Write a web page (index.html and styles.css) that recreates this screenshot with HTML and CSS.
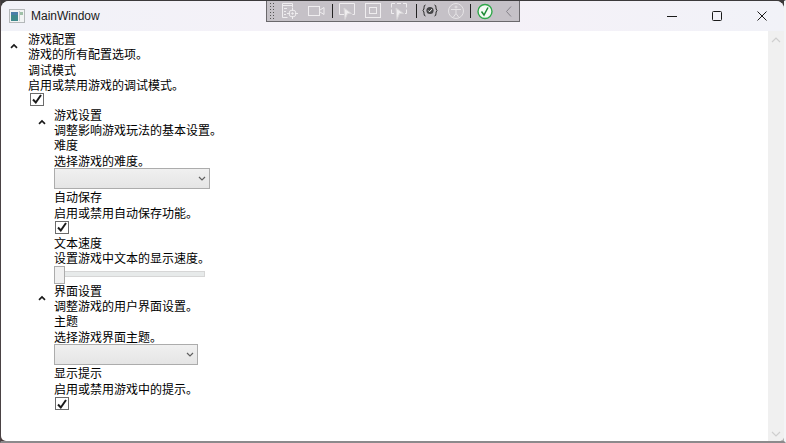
FILE: index.html
```html
<!DOCTYPE html>
<html lang="zh">
<head>
<meta charset="utf-8">
<title>MainWindow</title>
<link rel="stylesheet" href="styles.css">
</head>
<body>
<div class="window">
  <header class="titlebar">
    <svg class="app-icon" width="16" height="14" viewBox="0 0 16 14"><rect x="0.500" y="0.500" width="15" height="13" fill="#f2f4f4" stroke="#b4b8ba"/><rect x="2" y="3" width="7" height="9" fill="#3f8a8c"/><rect x="2" y="3" width="7" height="3" fill="#4a7fa8"/><rect x="10" y="2" width="1" height="10" fill="#c8ccce"/><rect x="11" y="3" width="3" height="3" fill="#9fc0a8"/></svg>
    <span class="title">MainWindow</span>
    <div class="debug-bar">
      <span class="grip"></span>
      <svg class="tool" width="26" height="20" viewBox="0 0 26 20" fill="none" stroke="#efedef"><path d="M15.500 6.500v-4h-10v14h5M5.500 4.500h10M7 7.500h3M7 10.500h2M7 13.500h2"/><circle cx="15.500" cy="12.500" r="3.500"/><circle cx="15.500" cy="12.500" r="0.800" fill="#efedef"/><path d="M15.500 7v3M15.500 15v3M10 12.500h3M18 12.500h3"/></svg>
      <svg class="tool" width="26" height="20" viewBox="0 0 26 20" fill="none" stroke="#efedef"><rect x="5.500" y="5.500" width="11" height="9"/><path d="M17 9l4-2.500v7l-4-2.500"/></svg>
      <span class="sep sep-one"></span>
      <svg class="tool" width="26" height="20" viewBox="0 0 26 20" fill="none" stroke="#efedef"><path d="M10 13.500H5.500v-11h15v11h-2"/><path d="M10 7l7.500 5.500h-4l-2.500 6z" fill="#efedef" stroke="#d8d6d8"/></svg>
      <svg class="tool" width="26" height="20" viewBox="0 0 26 20" fill="none" stroke="#efedef"><rect x="5.500" y="2.500" width="15" height="14"/><rect x="9.500" y="6.500" width="7" height="6"/></svg>
      <svg class="tool" width="26" height="20" viewBox="0 0 26 20" fill="none" stroke="#efedef"><path d="M8 12.500H5.500v-4M5.500 6.500v-4H9M11 2.500h4M17 2.500h3.500v4M20.500 8.500v4H19"/><path d="M10 7l7.500 5.500h-4l-2.500 6z" fill="#efedef" stroke="#d8d6d8"/></svg>
      <span class="sep sep-two"></span>
      <svg class="tool" width="26" height="20" viewBox="0 0 26 20" fill="none" stroke="#2a2a2a"><path d="M8.500 5c-2.500 0-.5 4-2.500 5.500 2 1.500 0 5.500 2.500 5.500M17.500 5c2.500 0 .5 4 2.500 5.500-2 1.500 0 5.500-2.500 5.500" transform="translate(0 -1)"/><circle cx="13" cy="9.500" r="3.600" fill="#444446" stroke="none"/><path d="M11.300 9.500l1.300 1.300 2.200-2.600" stroke="#fff"/></svg>
      <svg class="tool" width="26" height="20" viewBox="0 0 26 20" fill="none" stroke="#e6e4e6"><circle cx="13" cy="10" r="7.500"/><circle cx="13" cy="6" r="1"/><path d="M8 8.500h10M13 8.500v4M13 12.500l-3 4M13 12.500l3 4"/></svg>
      <span class="sep sep-three"></span>
      <svg class="tool" width="26" height="20" viewBox="0 0 26 20" fill="none"><circle cx="13" cy="10.500" r="7" fill="#f4faf4" stroke="#2fa84a" stroke-width="1.400"/><path d="M9.500 10.500l2.500 3.500 4-7.500" stroke="#1c8a34" stroke-width="1.500"/></svg>
      <svg class="tool" width="20" height="20" viewBox="0 0 20 20" fill="none" stroke="#86838a"><path d="M13 5.500L8.500 10.500l4.500 5"/></svg>
    </div>
    <div class="caption">
      <button class="cap-btn"><svg width="12" height="12" viewBox="0 0 12 12"><path d="M1 6.500h10" stroke="#1a1a1a"/></svg></button>
      <button class="cap-btn"><svg width="12" height="12" viewBox="0 0 12 12"><rect x="1.500" y="1.500" width="9" height="9" rx="1" fill="none" stroke="#1a1a1a"/></svg></button>
      <button class="cap-btn"><svg width="12" height="12" viewBox="0 0 12 12"><path d="M1.500 1.500l9 9M10.500 1.500l-9 9" stroke="#1a1a1a"/></svg></button>
    </div>
  </header>
  <div class="client">
    <main class="content">
      <section class="expander">
        <div class="header">
          <svg class="arrow" width="8" height="6" viewBox="0 0 8 6"><path d="M1 4.800L4 2l3 2.800" fill="none" stroke="#1a1a1a" stroke-width="1.700"/></svg>
          <div class="header-text"><div class="row">游戏配置</div><div class="row">游戏的所有配置选项。</div></div>
        </div>
        <div class="body">
          <div class="row">调试模式</div>
          <div class="row">启用或禁用游戏的调试模式。</div>
          <div class="check"><svg width="12" height="12" viewBox="0 0 12 12"><path d="M2 6.500l2.800 3L10 2" fill="none" stroke="#1a1a1a" stroke-width="2"/></svg></div>
          <section class="expander nested">
            <div class="header">
              <svg class="arrow" width="8" height="6" viewBox="0 0 8 6"><path d="M1 4.800L4 2l3 2.800" fill="none" stroke="#1a1a1a" stroke-width="1.700"/></svg>
              <div class="header-text"><div class="row">游戏设置</div><div class="row">调整影响游戏玩法的基本设置。</div></div>
            </div>
            <div class="body">
              <div class="row">难度</div>
              <div class="row">选择游戏的难度。</div>
              <div class="combo combo-wide"><svg width="8" height="5" viewBox="0 0 8 5"><path d="M1 1l3 3 3-3" fill="none" stroke="#606060" stroke-width="1.200"/></svg></div>
              <div class="row">自动保存</div>
              <div class="row">启用或禁用自动保存功能。</div>
              <div class="check"><svg width="12" height="12" viewBox="0 0 12 12"><path d="M2 6.500l2.800 3L10 2" fill="none" stroke="#1a1a1a" stroke-width="2"/></svg></div>
              <div class="row">文本速度</div>
              <div class="row">设置游戏中文本的显示速度。</div>
              <div class="slider"><span class="thumb"></span></div>
            </div>
          </section>
          <section class="expander nested">
            <div class="header">
              <svg class="arrow" width="8" height="6" viewBox="0 0 8 6"><path d="M1 4.800L4 2l3 2.800" fill="none" stroke="#1a1a1a" stroke-width="1.700"/></svg>
              <div class="header-text"><div class="row">界面设置</div><div class="row">调整游戏的用户界面设置。</div></div>
            </div>
            <div class="body">
              <div class="row">主题</div>
              <div class="row">选择游戏界面主题。</div>
              <div class="combo combo-narrow"><svg width="8" height="5" viewBox="0 0 8 5"><path d="M1 1l3 3 3-3" fill="none" stroke="#606060" stroke-width="1.200"/></svg></div>
              <div class="row">显示提示</div>
              <div class="row">启用或禁用游戏中的提示。</div>
              <div class="check"><svg width="12" height="12" viewBox="0 0 12 12"><path d="M2 6.500l2.800 3L10 2" fill="none" stroke="#1a1a1a" stroke-width="2"/></svg></div>
            </div>
          </section>
        </div>
      </section>
    </main>
    <aside class="scrollbar">
      <svg width="10" height="6" viewBox="0 0 10 6"><path d="M1 5l4-4 4 4" fill="none" stroke="#cfcfcf" stroke-width="1.200"/></svg>
      <svg width="10" height="6" viewBox="0 0 10 6"><path d="M1 1l4 4 4-4" fill="none" stroke="#cfcfcf" stroke-width="1.200"/></svg>
    </aside>
  </div>
</div>
</body>
</html>
```

FILE: styles.css
```css
* { box-sizing: border-box; }
html { height: 100%; overflow: hidden; }
body {
  margin: 0;
  height: 443px;
  display: flex;
  border-style: solid;
  border-width: 1px 2px 2px 1px;
  border-color: #3c3a3c #f4f4f6 #8c8a8c #4a4244;
  background: linear-gradient(#3a3a3a, #3a3a3a) top / 100% 50% no-repeat, linear-gradient(90deg, #4a3a3a 50%, #b4b4b4 50%);
  font-family: "Noto Sans CJK SC", "Liberation Sans", sans-serif;
  font-size: 12px;
  color: #000;
}
.window { flex: 1; display: flex; flex-direction: column; background: #fff; border-radius: 8px 8px 5px 5px; overflow: hidden; }
.titlebar { height: 30px; flex: none; display: flex; align-items: center; background: linear-gradient(90deg, #f1f2f8, #f6f1f8 55%, #f1f2f8); position: relative; padding-left: 8px; }
.app-icon { flex: none; }
.title { margin-left: 6px; font-family: "Liberation Sans", sans-serif; font-size: 12px; color: #1a1a1a; }
.debug-bar { position: absolute; left: 265px; top: -1px; width: 254px; height: 22px; display: flex; align-items: center; background: #c5c1c7; border: 1px solid #6a686c; padding-left: 2px; }
.grip { width: 6px; height: 18px; margin-right: 2px; flex: none; background-image: radial-gradient(#555 0.7px, transparent 0.8px); background-size: 3px 3px; }
.tool { flex: none; }
.sep { width: 1px; height: 14px; background: #222; flex: none; }
.sep-one { margin: 0 1px 0 3px; }
.sep-two { margin: 0 0 0 4px; }
.sep-three { margin: 0 1px; }
.caption { margin-left: auto; display: flex; }
.cap-btn { width: 45px; height: 30px; padding: 0; border: 0; background: none; display: flex; align-items: center; justify-content: center; }
.client { flex: 1; display: flex; min-height: 0; }
.content { flex: 1; padding-left: 9px; }
.scrollbar { width: 16px; flex: none; background: #f0f0f0; display: flex; flex-direction: column; justify-content: space-between; align-items: center; padding: 6px 0 4px; }
.row { height: 15.4px; line-height: 15.4px; white-space: nowrap; }
.header { display: flex; align-items: center; }
.arrow { flex: none; margin-right: 10px; }
.expander > .body { padding-left: 18px; }
.nested > .header .arrow { margin-left: 10px; margin-right: 8px; }
.nested > .body { padding-left: 26px; }
.check { width: 14px; height: 13px; margin: 0 0 1px 2px; border: 1px solid #6b6b6b; background: #fff; display: flex; align-items: center; justify-content: center; }
.nested .check { margin: 1px 0 1px 1px; }
.combo { height: 21px; border: 1px solid #acacac; background: linear-gradient(#f0f0f0, #e5e5e5); display: flex; align-items: center; justify-content: flex-end; padding-right: 3px; }
.combo-wide { width: 156px; }
.combo-narrow { width: 144px; }
.slider { width: 151px; height: 17px; position: relative; display: flex; align-items: center; }
.slider::before { content: ""; display: block; width: 100%; height: 4px; background: #e7eaea; border: 1px solid #d6d6d6; }
.thumb { position: absolute; left: 0; top: 0; width: 11px; height: 18px; background: #f0f0f0; border: 1px solid #acacac; }
```
